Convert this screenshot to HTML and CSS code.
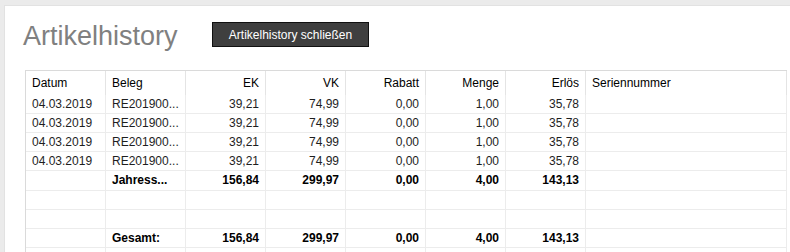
FILE: index.html
```html
<!DOCTYPE html>
<html lang="de">
<head>
    <meta charset="UTF-8">
    <meta name="viewport" content="width=device-width, initial-scale=1.0">
    <title>Artikelhistory</title>
    <link rel="stylesheet" href="styles.css">
</head>
<body>
    <div class="panel">
        <!-- Kopfbereich -->
        <div class="head">
            <h1 class="title">Artikelhistory</h1>
            <button class="close-btn" type="button">Artikelhistory schließen</button>
        </div>

        <!-- Tabelle -->
        <table class="history">
            <colgroup>
                <col class="c80"><col class="c80"><col class="c80"><col class="c80">
                <col class="c80"><col class="c80"><col class="c80"><col class="c-serial">
            </colgroup>
            <thead>
                <tr>
                    <th>Datum</th>
                    <th>Beleg</th>
                    <th class="num">EK</th>
                    <th class="num">VK</th>
                    <th class="num">Rabatt</th>
                    <th class="num">Menge</th>
                    <th class="num">Erlös</th>
                    <th>Seriennummer</th>
                </tr>
            </thead>
            <tbody>
                <tr>
                    <td>04.03.2019</td><td>RE201900...</td>
                    <td class="num">39,21</td><td class="num">74,99</td><td class="num">0,00</td>
                    <td class="num">1,00</td><td class="num">35,78</td><td></td>
                </tr>
                <tr>
                    <td>04.03.2019</td><td>RE201900...</td>
                    <td class="num">39,21</td><td class="num">74,99</td><td class="num">0,00</td>
                    <td class="num">1,00</td><td class="num">35,78</td><td></td>
                </tr>
                <tr>
                    <td>04.03.2019</td><td>RE201900...</td>
                    <td class="num">39,21</td><td class="num">74,99</td><td class="num">0,00</td>
                    <td class="num">1,00</td><td class="num">35,78</td><td></td>
                </tr>
                <tr>
                    <td>04.03.2019</td><td>RE201900...</td>
                    <td class="num">39,21</td><td class="num">74,99</td><td class="num">0,00</td>
                    <td class="num">1,00</td><td class="num">35,78</td><td></td>
                </tr>
                <tr class="sum tall">
                    <td></td><td>Jahress...</td>
                    <td class="num">156,84</td><td class="num">299,97</td><td class="num">0,00</td>
                    <td class="num">4,00</td><td class="num">143,13</td><td></td>
                </tr>
                <tr>
                    <td></td><td></td><td></td><td></td><td></td><td></td><td></td><td></td>
                </tr>
                <tr>
                    <td></td><td></td><td></td><td></td><td></td><td></td><td></td><td></td>
                </tr>
                <tr class="sum">
                    <td></td><td>Gesamt:</td>
                    <td class="num">156,84</td><td class="num">299,97</td><td class="num">0,00</td>
                    <td class="num">4,00</td><td class="num">143,13</td><td></td>
                </tr>
                <tr>
                    <td></td><td></td><td></td><td></td><td></td><td></td><td></td><td></td>
                </tr>
            </tbody>
        </table>
    </div>
</body>
</html>
```

FILE: styles.css
```css
html, body {
    margin: 0;
    height: 100%;
    overflow: hidden;
}
body {
    background-color: #ebebeb;
    font-family: "Liberation Sans", Arial, sans-serif;
    font-size: 12px;
    color: #1e1e1e;
}
.panel {
    margin: 5px 0 0 4px;
    height: calc(100% - 5px);
    overflow: hidden;
    background-color: #fff;
    border-top: 1px solid #e2e2e2;
    border-left: 1px solid #e2e2e2;
    box-sizing: border-box;
}
.head {
    display: flex;
    align-items: flex-start;
    padding: 14px 0 0 18px;
}
.title {
    width: 189px;
    margin: 0;
    font-size: 27px;
    font-weight: normal;
    line-height: 32px;
    color: #808080;
}
.close-btn {
    width: 157px;
    height: 25px;
    margin-top: 2px;
    padding: 0;
    background-color: #3f3f3f;
    border: 1px solid #111;
    color: #fff;
    font-family: "Liberation Sans", Arial, sans-serif;
    font-size: 12px;
    cursor: pointer;
}
.history {
    margin: 18px 0 0 20px;
    border-collapse: separate;
    border-spacing: 0;
    table-layout: fixed;
    width: 762px;
    border-top: 1px solid #dadada;
    border-left: 1px solid #dadada;
}
.c80 {
    width: 80px;
}
.c-serial {
    width: 201px;
}
.history th, .history td {
    padding: 0 6px;
    text-align: left;
    white-space: nowrap;
    overflow: hidden;
    box-sizing: border-box;
}
.history th {
    font-weight: normal;
    line-height: 24px;
    color: #000;
    border-right: 1px solid #e4e4e4;
}
.history td {
    line-height: 18px;
    height: 19px;
    border-right: 1px solid #ececec;
    border-bottom: 1px solid #ececec;
}
.history .num {
    text-align: right;
}
.history .sum td {
    font-weight: bold;
    color: #000;
}
.history .tall td {
    line-height: 19px;
    height: 20px;
}
```
